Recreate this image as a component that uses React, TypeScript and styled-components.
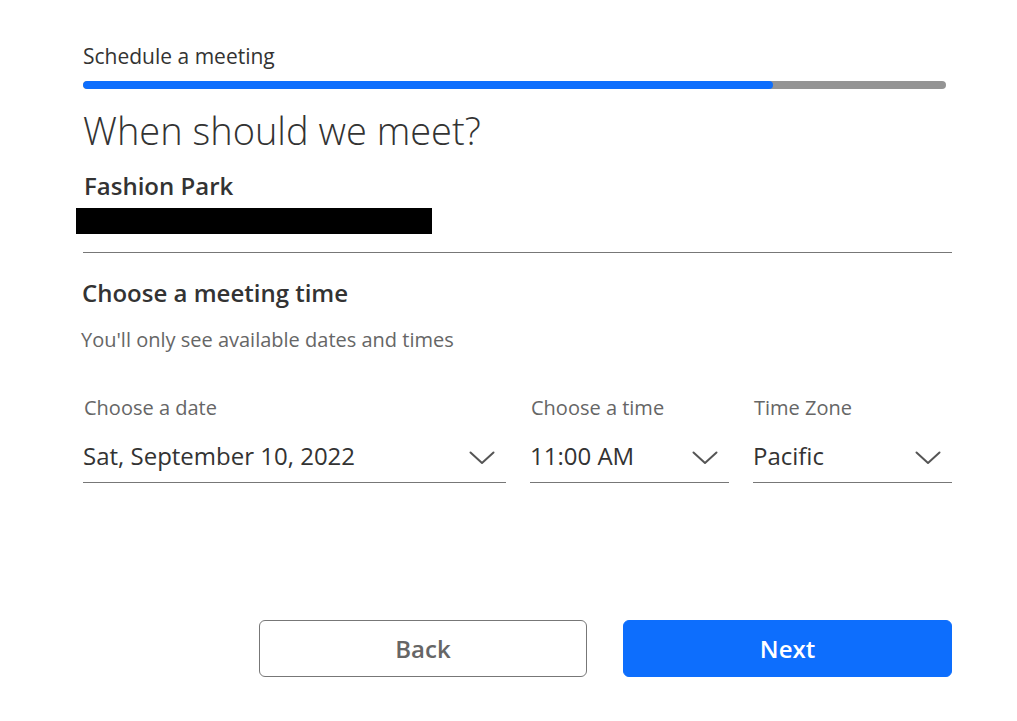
import React from "react";
import styled, { createGlobalStyle } from "styled-components";

const Global = createGlobalStyle`
  html, body { margin: 0; padding: 0; background: #fff; }
  body { font-family: "Open Sans", "Noto Sans", sans-serif; color: #333; }
`;

const Page = styled.div`
  width: 869px;
  margin-left: 83px;
  padding-top: 42px;
  display: flex;
  flex-direction: column;
`;

const StepTitle = styled.div`
  font-size: 21px;
  line-height: 28px;
  color: #333;
`;

const Progress = styled.div`
  margin-top: 11px;
  width: 863px;
  height: 8px;
  border-radius: 4px;
  background: #949494;
  overflow: hidden;
`;

const ProgressFill = styled.div`
  height: 100%;
  background: #0d6efd;
  border-radius: 4px;
`;

const Heading = styled.h1`
  margin: 16px 0 0;
  font-weight: 300;
  font-size: 38px;
  line-height: 50px;
  color: #333;
`;

const Location = styled.div`
  margin-top: 15px;
  margin-left: 1px;
  font-size: 24px;
  font-weight: 600;
  line-height: 32px;
  color: #333;
`;

const Redacted = styled.div`
  margin-top: 6px;
  margin-left: -7px;
  width: 356px;
  height: 26px;
  background: #000;
`;

const Divider = styled.hr`
  margin: 18px 0 0;
  border: 0;
  border-top: 1px solid #777;
`;

const SectionTitle = styled.h2`
  margin: 24px 0 0 -1px;
  font-size: 24px;
  font-weight: 600;
  line-height: 32px;
  color: #333;
`;

const Hint = styled.p`
  margin: 17px 0 0 -2px;
  font-size: 20px;
  line-height: 28px;
  color: #666;
`;

const Fields = styled.div`
  margin-top: 40px;
  display: grid;
  grid-template-columns: 423px 199px 199px;
  column-gap: 24px;
`;

const Field = styled.div`
  display: flex;
  flex-direction: column;
`;

const Label = styled.label`
  font-size: 20px;
  line-height: 28px;
  color: #666;
  padding-left: 1px;
`;

const SelectBox = styled.div`
  margin-top: 14px;
  height: 47px;
  padding: 4px 0 10px;
  display: flex;
  align-items: center;
  justify-content: space-between;
  border-bottom: 1px solid #777;
  box-sizing: border-box;
`;

const Value = styled.span`
  font-size: 24px;
  line-height: 32px;
  color: #333;
`;

const Chevron = styled.svg`
  width: 26px;
  height: 14px;
  margin-right: 11px;
  margin-top: 4px;
`;

const Actions = styled.div`
  margin-top: 137px;
  margin-left: 176px;
  display: grid;
  grid-template-columns: 328px 329px;
  column-gap: 36px;
`;

const Button = styled.button<{ $primary?: boolean }>`
  height: 57px;
  border-radius: 6px;
  font-family: "Open Sans", sans-serif;
  font-size: 24px;
  font-weight: 600;
  cursor: pointer;
  border: 1px solid ${(p) => (p.$primary ? "#0d6efd" : "#777")};
  background: ${(p) => (p.$primary ? "#0d6efd" : "#fff")};
  color: ${(p) => (p.$primary ? "#fff" : "#666")};
`;

const ChevronIcon = () => (
  <Chevron viewBox="0 0 26 14" fill="none">
    <path d="M1.5 1.5 L13 12 L24.5 1.5" stroke="#555" strokeWidth="2" strokeLinecap="round" strokeLinejoin="round" />
  </Chevron>
);

const SelectField = ({ label, value }: { label: string; value: string }) => (
  <Field>
    <Label>{label}</Label>
    <SelectBox>
      <Value>{value}</Value>
      <ChevronIcon />
    </SelectBox>
  </Field>
);

export default function App() {
  return (
    <>
      <Global />
      <Page>
        <StepTitle>Schedule a meeting</StepTitle>
        <Progress>
          <ProgressFill style={{ width: `${(690 / 863) * 100}%` }} />
        </Progress>
        <Heading>When should we meet?</Heading>
        <Location>Fashion Park</Location>
        <Redacted />
        <Divider />
        <SectionTitle>Choose a meeting time</SectionTitle>
        <Hint>You'll only see available dates and times</Hint>
        <Fields>
          <SelectField label="Choose a date" value="Sat, September 10, 2022" />
          <SelectField label="Choose a time" value="11:00 AM" />
          <SelectField label="Time Zone" value="Pacific" />
        </Fields>
        <Actions>
          <Button>Back</Button>
          <Button $primary>Next</Button>
        </Actions>
      </Page>
    </>
  );
}
